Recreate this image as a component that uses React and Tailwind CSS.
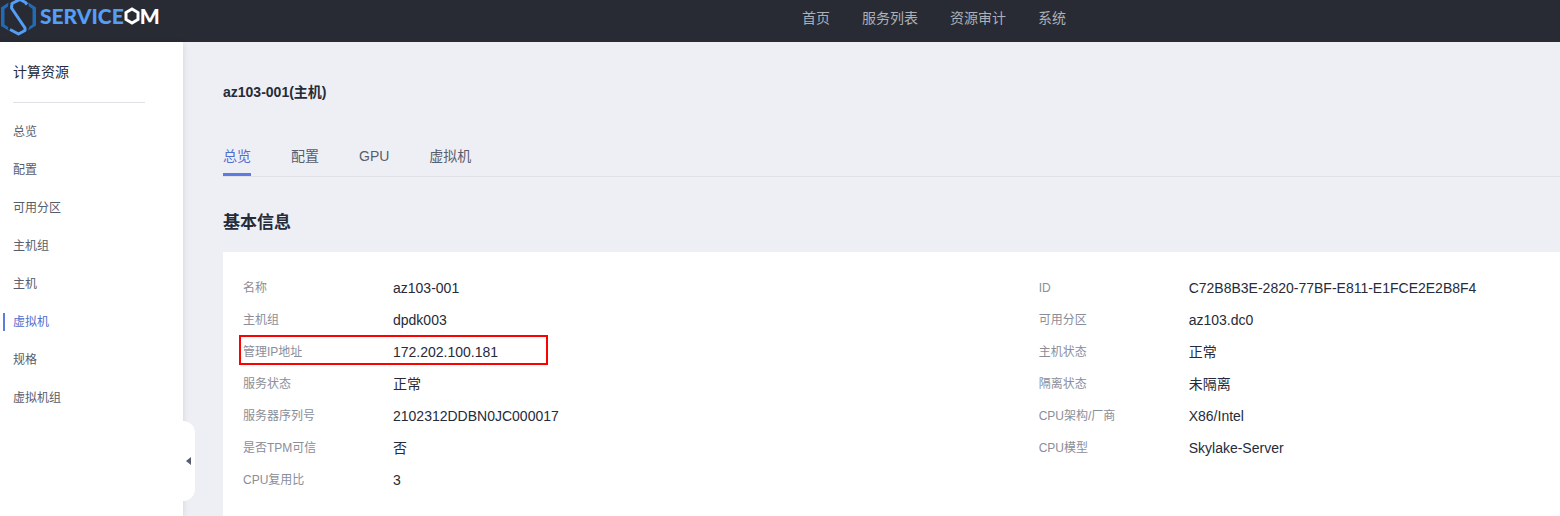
const navItems = ['首页', '服务列表', '资源审计', '系统'];

const menuItems = ['总览', '配置', '可用分区', '主机组', '主机', '虚拟机', '规格', '虚拟机组'];

const tabs = ['总览', '配置', 'GPU', '虚拟机'];

const leftInfo = [
  { label: '名称', value: 'az103-001' },
  { label: '主机组', value: 'dpdk003' },
  { label: '管理IP地址', value: '172.202.100.181', marked: true },
  { label: '服务状态', value: '正常' },
  { label: '服务器序列号', value: '2102312DDBN0JC000017' },
  { label: '是否TPM可信', value: '否' },
  { label: 'CPU复用比', value: '3' },
];

const rightInfo = [
  { label: 'ID', value: 'C72B8B3E-2820-77BF-E811-E1FCE2E2B8F4' },
  { label: '可用分区', value: 'az103.dc0' },
  { label: '主机状态', value: '正常' },
  { label: '隔离状态', value: '未隔离' },
  { label: 'CPU架构/厂商', value: 'X86/Intel' },
  { label: 'CPU模型', value: 'Skylake-Server' },
];

const Logo = () => (
  <a href="#" aria-label="ServiceOM" className="flex items-start">
    <svg width="36" height="37" viewBox="0 0 36 37" fill="none" className="shrink-0">
      <path d="M8.5 2.5L8 6.5L4.5 9V24.5L8 27L8.5 30.5L1 26V7.5Z" fill="#2469b3" />
      <path d="M28.5 2.5L36 7.5V25.5L28 30.5L29.5 26.5L32.5 24.5V9L28.5 6Z" fill="#2469b3" />
      <path d="M27 4.5L25.5 2.5L20 -0.5L12 3.5L11.5 8L25 28V30.5L18.5 34L10 29.5" stroke="#549ef7" strokeWidth="3" strokeLinejoin="round" />
    </svg>
    <span className="ml-1 flex items-center font-[Lato] text-[21px] leading-8 font-black text-[#549ef7]">
      SERVICE
      <svg width="16" height="18" viewBox="0 0 16 18" fill="none" className="shrink-0">
        <path d="M8 2L14 5.5V12.5L8 16L2 12.5V5.5Z" stroke="#fff" strokeWidth="3" />
      </svg>
      <span className="text-white">M</span>
    </span>
  </a>
);

const InfoList = ({ items }) => (
  <dl>
    {items.map((item) => (
      <div key={item.label} className="relative flex h-8 items-center">
        <dt className="w-[150px] shrink-0 text-xs text-[#8a8e99]">{item.label}</dt>
        <dd className="text-sm text-[#252b3a]">{item.value}</dd>
        {item.marked && <span className="absolute -left-1 -top-px h-[30px] w-[309px] border-2 border-[#ff0000]" />}
      </div>
    ))}
  </dl>
);

const App = () => {
  return (
    <div className="flex min-h-screen flex-col overflow-hidden bg-[#eeeff5] font-['Liberation_Sans','Noto_Sans_CJK_SC',sans-serif]">
      {/* Top bar */}
      <header className="flex h-[42px] items-start bg-[#282b33]">
        <div className="flex-1">
          <Logo />
        </div>
        <nav className="flex h-9 w-[758px] items-center gap-8 text-sm text-[#adb0b8]">
          {navItems.map((item) => (
            <a key={item} href="#">{item}</a>
          ))}
        </nav>
      </header>

      <div className="flex flex-1">
        {/* Side menu */}
        <aside className="relative w-[183px] shrink-0 bg-white shadow-[0_2px_6px_rgba(0,0,0,0.12)]">
          <h2 className="mx-[13px] mr-[38px] flex h-[61px] items-center border-b border-[#dfe1e6] text-sm text-[#252b3a]">计算资源</h2>
          <ul className="mt-[10px] text-xs text-[#575d6c]">
            {menuItems.map((item) => (
              <li key={item} className="flex h-[38px] items-center pl-[3px]">
                <a
                  href="#"
                  className={item === '虚拟机' ? 'border-l-2 border-[#5e7ce0] pl-2 leading-[18px] text-[#526ecc]' : 'border-l-2 border-transparent pl-2 leading-[18px]'}
                >
                  {item}
                </a>
              </li>
            ))}
          </ul>
          <button aria-label="收起" className="absolute -right-3 top-[379px] flex h-20 w-3 items-center rounded-r-xl bg-white pl-[3px]">
            <svg width="6" height="8" viewBox="0 0 6 8">
              <path d="M0 4L5 0V8Z" fill="#575d6c" />
            </svg>
          </button>
        </aside>

        {/* Host details */}
        <main className="flex min-w-0 flex-1 flex-col pl-10">
          <h1 className="mt-10 text-sm font-bold text-[#252b3a]">az103-001(主机)</h1>

          <div role="tablist" className="mt-10 flex gap-10 border-b border-[#dfe1e6] text-sm text-[#575d6c]">
            {tabs.map((tab, i) => (
              <button
                key={tab}
                role="tab"
                aria-selected={i === 0}
                className={i === 0 ? 'h-[34px] border-b-3 border-[#5e7ce0] pb-1 text-[#526ecc]' : 'h-[34px] border-b-3 border-transparent pb-1'}
              >
                {tab}
              </button>
            ))}
          </div>

          <h2 className="mt-8 text-[17px] leading-7 font-bold text-[#252b3a]">基本信息</h2>
          <section className="mt-[15px] grid flex-1 grid-cols-[29fr_19fr] content-start bg-white pt-5 pb-5 pl-5">
            <InfoList items={leftInfo} />
            <InfoList items={rightInfo} />
          </section>
        </main>
      </div>
    </div>
  );
};

export default App;
